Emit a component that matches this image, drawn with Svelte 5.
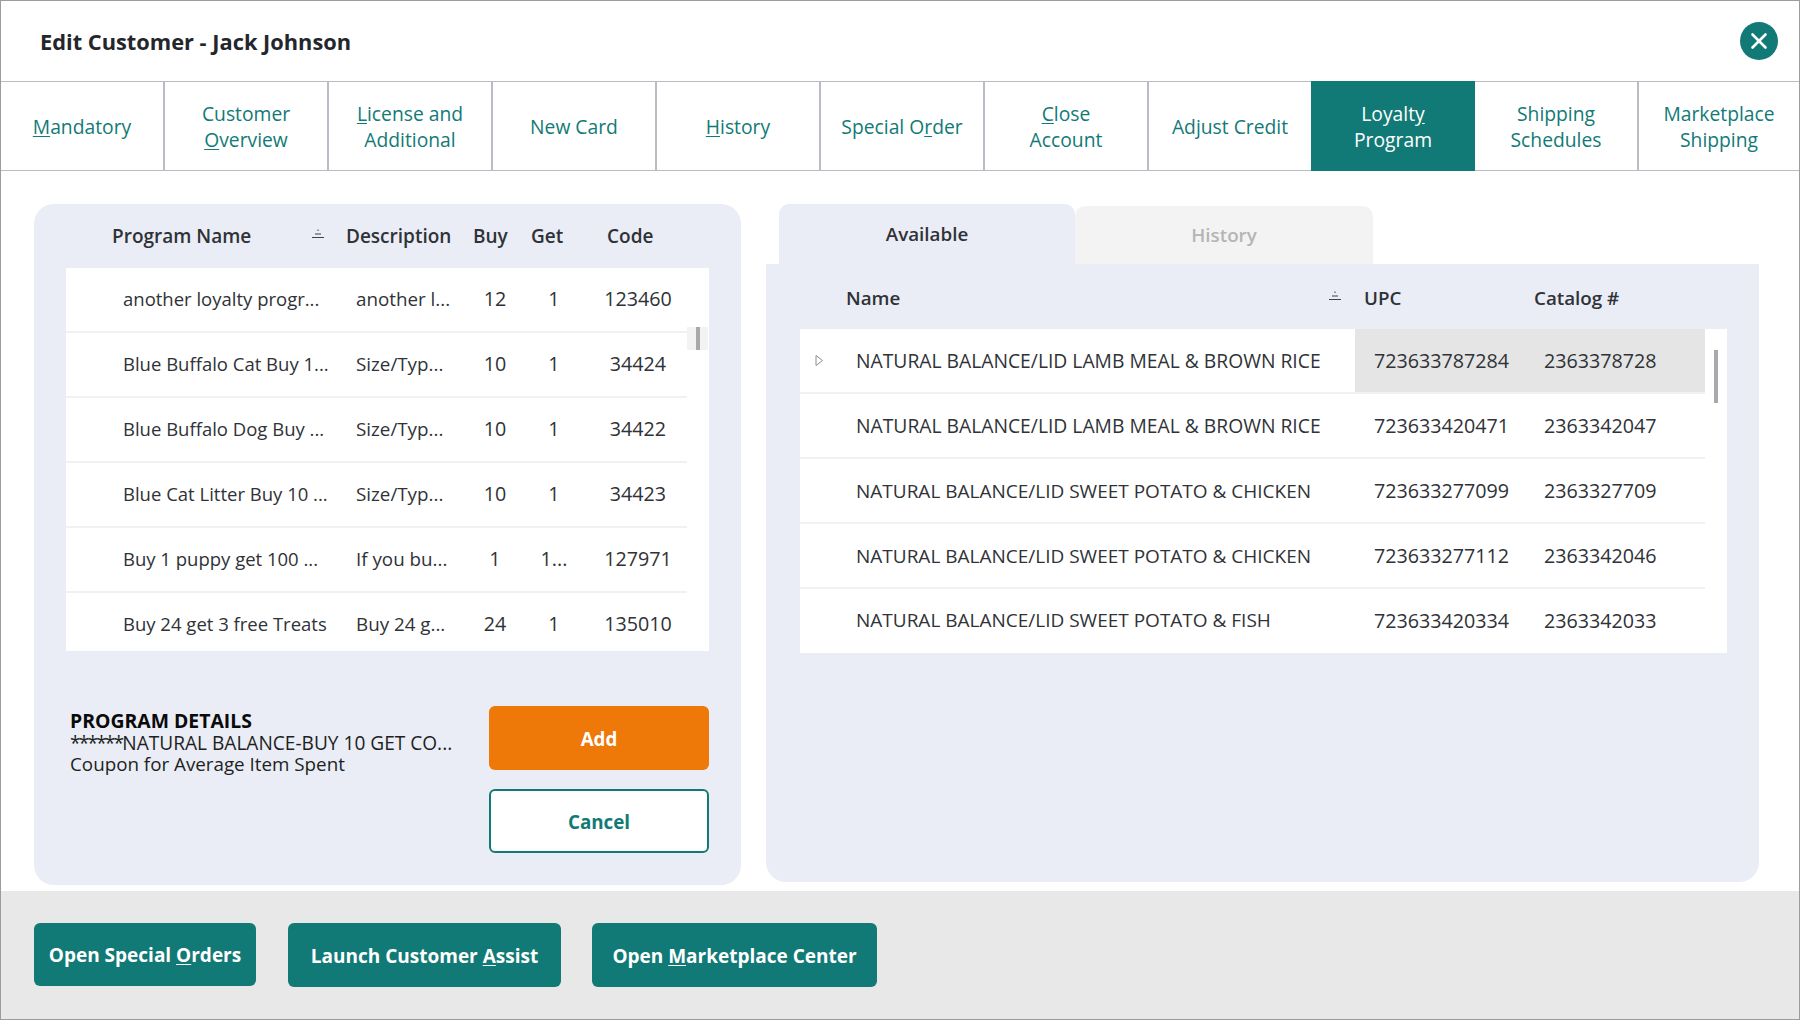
<script>
  const tabs = [
    [['', 'M', 'andatory']],
    [['Customer'], ['', 'O', 'verview']],
    [['', 'L', 'icense and'], ['Additional']],
    [['New Card']],
    [['', 'H', 'istory']],
    [['Special O', 'r', 'der']],
    [['', 'C', 'lose'], ['Account']],
    [['Adjust Credit']],
    [['Loyalt', 'y', ''], ['Program']],
    [['Shipping'], ['Schedules']],
    [['Marketplace'], ['Shipping']]
  ];
  const programs = [
    ['another loyalty progr...', 'another l...', '12', '1', '123460'],
    ['Blue Buffalo Cat Buy 1...', 'Size/Typ...', '10', '1', '34424'],
    ['Blue Buffalo Dog Buy ...', 'Size/Typ...', '10', '1', '34422'],
    ['Blue Cat Litter Buy 10 ...', 'Size/Typ...', '10', '1', '34423'],
    ['Buy 1 puppy get 100 ...', 'If you bu...', '1', '1...', '127971'],
    ['Buy 24 get 3 free Treats', 'Buy 24 g...', '24', '1', '135010']
  ];
  const items = [
    ['NATURAL BALANCE/LID LAMB MEAL & BROWN RICE', '723633787284', '2363378728'],
    ['NATURAL BALANCE/LID LAMB MEAL & BROWN RICE', '723633420471', '2363342047'],
    ['NATURAL BALANCE/LID SWEET POTATO & CHICKEN', '723633277099', '2363327709'],
    ['NATURAL BALANCE/LID SWEET POTATO & CHICKEN', '723633277112', '2363342046'],
    ['NATURAL BALANCE/LID SWEET POTATO & FISH', '723633420334', '2363342033']
  ];
</script>

{#snippet sort()}
  <svg class="sort" width="14" height="10" viewBox="0 0 14 10">
    <path d="M7 0.5v1.5M4 5h6M1 8.5h12" stroke="#3f4248" stroke-width="1" fill="none"/>
  </svg>
{/snippet}

<div class="win">
  <header class="head">
    <h1>Edit Customer - Jack Johnson</h1>
    <button class="close" aria-label="Close">
      <svg width="20" height="20" viewBox="0 0 20 20"><path d="M3.5 3.5l13 13M16.5 3.5l-13 13" stroke="#fff" stroke-width="2.6" stroke-linecap="round"/></svg>
    </button>
  </header>

  <nav class="tabs">
    {#each tabs as t, i}
      <div class="tab" class:on={i === 8}>
        {#each t as l}
          <span>{l[0]}{#if l[1]}<u>{l[1]}</u>{/if}{l[2] ?? ''}</span>
        {/each}
      </div>
    {/each}
  </nav>

  <main class="body">
    <section class="left">
      <div class="lhead">
        <span>Program Name</span>
        <span class="c-sort">{@render sort()}</span>
        <span>Description</span>
        <span>Buy</span>
        <span>Get</span>
        <span>Code</span>
      </div>
      <div class="ltable">
        <div class="lrows">
          {#each programs as p}
            <div class="lrow">
              <span class="r-name">{p[0]}</span>
              <span class="r-desc">{p[1]}</span>
              <span class="r-c">{p[2]}</span>
              <span class="r-c">{p[3]}</span>
              <span class="r-c">{p[4]}</span>
            </div>
          {/each}
        </div>
        <div class="ltrack"><div class="lthumb"></div></div>
      </div>
      <div class="foot">
        <div class="details">
          <strong>PROGRAM DETAILS</strong>
          <span class="caps"><span class="stars">******</span>NATURAL BALANCE-BUY 10 GET CO...</span>
          <span class="last">Coupon for Average Item Spent</span>
        </div>
        <div class="acts">
          <button class="add">Add</button>
          <button class="cancel">Cancel</button>
        </div>
      </div>
    </section>

    <section class="right">
      <div class="rtabs">
        <div class="rt active">Available</div>
        <div class="rt hist">History</div>
      </div>
      <div class="rpanel">
        <div class="rhead">
          <span>Name</span>
          <span class="h-sort">{@render sort()}</span>
          <span>UPC</span>
          <span>Catalog #</span>
        </div>
        <div class="rtable">
          <div class="rrows">
            {#each items as it, i}
              <div class="rrow" class:sel={i === 0}>
                <span class="arrow">
                  {#if i === 0}
                    <svg width="9" height="13" viewBox="0 0 9 13"><path d="M1 1.5l6.5 5-6.5 5z" fill="none" stroke="#8b8e94" stroke-width="1"/></svg>
                  {/if}
                </span>
                <span class="i-name">{it[0]}</span>
                <span class="i-num">{it[1]}</span>
                <span class="i-num">{it[2]}</span>
              </div>
            {/each}
          </div>
          <div class="rtrack"><div class="rthumb"></div></div>
        </div>
      </div>
    </section>
  </main>

  <footer class="bottom">
    <button class="b1">Open Special <u>O</u>rders</button>
    <button class="b2">Launch Customer <u>A</u>ssist</button>
    <button class="b3">Open <u>M</u>arketplace Center</button>
  </footer>
</div>

<style>
  :global(body) { margin: 0; background: #fff; }
  * { box-sizing: border-box; }
  .win {
    width: 1800px; height: 1020px; display: flex; flex-direction: column;
    border: 1px solid #9c9c9c; background: #fff;
    font-family: "Open Sans", "Noto Sans", sans-serif; color: #2f3237;
    font-size: 18.8px; overflow: hidden;
  }
  .head { height: 80px; flex: none; display: flex; align-items: center; justify-content: space-between; padding: 0 21px 0 39px; }
  h1 { margin: 0; font-size: 21.8px; font-weight: 700; color: #23262b; }
  .close { width: 38px; height: 38px; border-radius: 50%; border: 0; padding: 0; background: #127a76; display: flex; align-items: center; justify-content: center; }

  .tabs { height: 90px; flex: none; display: grid; grid-template-columns: repeat(7, 164px) 162px 164px 164px 1fr; border-top: 1px solid #b9bcc2; border-bottom: 1px solid #b9bcc2; }
  .tab {
    display: flex; flex-direction: column; align-items: center; justify-content: center; padding-top: 2px;
    color: #127a76; border-right: 2px solid #b9bcc2; font-size: 19.3px; font-weight: 500; line-height: 26px; text-align: center;
  }
  .tab:last-child, .tab:nth-child(8) { border-right: 0; }
  .tab.on { background: #127a76; color: #fff; border-right: 0; margin: -1px 0; }
  u { text-underline-offset: 2px; }

  .body { flex: 1; display: flex; gap: 25px; padding: 33px 41px 0 33px; align-items: flex-start; min-height: 0; }

  .left { width: 707px; height: 681px; background: #eaedf5; border-radius: 20px; padding: 0 32px; display: flex; flex-direction: column; flex: none; }
  .lhead { height: 64px; flex: none; display: grid; grid-template-columns: 199px 35px 127px 58px 76px 1fr; padding-left: 46px; align-items: center; font-weight: 600; font-size: 19px; }
  .c-sort { display: flex; margin-top: -4px; }
  .sort { display: block; }

  .ltable { height: 383px; flex: none; background: #fff; display: flex; overflow: hidden; }
  .lrows { width: 621px; flex: none; }
  .lrow { height: 65px; display: grid; grid-template-columns: 233px 111px 56px 62px 106px; padding: 0 0 2px 57px; align-items: center; border-bottom: 2px solid #f0f1f3; }
  .lrow:last-child { border-bottom-color: transparent; }
  .r-c { text-align: center; font-size: 19.7px; }
  .r-name, .r-desc { white-space: nowrap; }
  .r-name { font-size: 18.5px; }
  .ltrack { width: 21px; flex: none; position: relative; }
  .lthumb { position: absolute; left: 0; top: 59px; width: 21px; height: 23px; background: #f3f3f3; }
  .lthumb::after { content: ""; position: absolute; left: 9px; top: 0; width: 4px; height: 23px; background: #a9a9ab; }

  .foot { flex: 1; display: flex; justify-content: space-between; padding-top: 55px; }
  .details { display: flex; flex-direction: column; padding: 4px 0 0 4px; line-height: 22px; color: #1d1f22; }
  .details strong { font-weight: 700; color: #0a0a0a; font-size: 19.4px; }
  .details span { white-space: nowrap; }
  .details .caps { font-size: 19.1px; }
  .details .stars { letter-spacing: -1.8px; }
  .details .last { margin-top: -1px; }
  .acts { width: 220px; display: flex; flex-direction: column; gap: 19px; }
  .acts button { height: 64px; border-radius: 6px; padding: 2px 0 0; font: 700 18.8px "Open Sans", sans-serif; }
  .add { background: #ee7808; border: 0; color: #fff; }
  .cancel { background: #fff; border: 2px solid #127a76; color: #127a76; }

  .right { width: 993px; flex: none; display: flex; flex-direction: column; }
  .rtabs { height: 60px; flex: none; display: flex; align-items: flex-end; padding-left: 13px; }
  .rt { display: flex; align-items: center; justify-content: center; border-radius: 10px 10px 0 0; }
  .active { width: 296px; height: 60px; background: #eaedf5; font-weight: 600; }
  .hist { width: 298px; height: 58px; background: #f3f3f3; color: #b5b5b5; font-weight: 600; }
  .rpanel { height: 618px; flex: none; background: #eaedf5; border-radius: 0 0 20px 20px; padding: 0 32px 0 34px; }
  .rhead { height: 65px; display: grid; grid-template-columns: 482px 36px 170px 1fr; padding: 2px 0 0 46px; align-items: center; font-weight: 600; }
  .h-sort { display: flex; margin-top: -4px; }
  .rtable { height: 324px; background: #fff; display: flex; }
  .rrows { width: 905px; flex: none; }
  .rrow { height: 65px; display: grid; grid-template-columns: 56px 499px 170px 1fr; align-items: center; border-bottom: 2px solid #f0f1f3; }
  .rrow:last-child { border-bottom-color: transparent; height: 64px; }
  .rrow.sel { background: linear-gradient(90deg, #fff 555px, #e5e5e5 555px); }
  .arrow { display: flex; padding-left: 15px; }
  .i-name { white-space: nowrap; font-size: 19.3px; }
  .rrow:nth-child(n+3) .i-name { font-size: 19px; }
  .i-num { padding-left: 19px; white-space: nowrap; font-size: 19.7px; }
  .rtrack { width: 22px; flex: none; position: relative; }
  .rthumb { position: absolute; left: 9px; top: 21px; width: 4px; height: 53px; background: #a9a9ab; }

  .bottom { flex: none; height: 128px; background: #e8e8e8; display: flex; align-items: flex-start; padding: 32px 0 0 33px; }
  .bottom button { height: 64px; border: 0; border-radius: 6px; background: #127a76; color: #fff; font: 700 19px "Open Sans", sans-serif; padding: 2px 0 0; }
  .bottom .b1 { width: 222px; margin-right: 32px; height: 63px; padding: 1px 0 0; }
  .b2 { width: 273px; margin-right: 31px; }
  .b3 { width: 285px; }
</style>
